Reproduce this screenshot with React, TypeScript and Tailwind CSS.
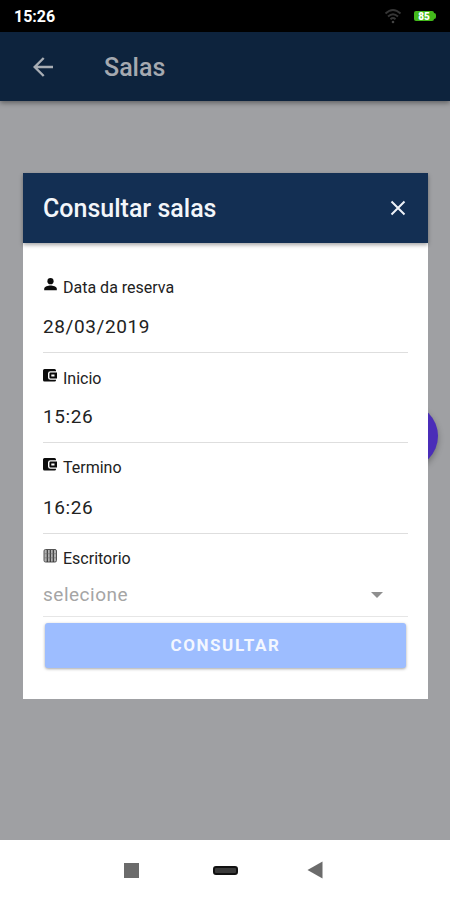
import React, { useState } from 'react';

function WalletIcon() {
  return (
    <svg className="h-[13px] w-[14px]" viewBox="0 0 14 13">
      <path fill="#0c0c0c" d="M1.500 0h10q1.500 0 1.500 1.500v.7H7.500Q5 2.200 5 4.500v4q0 2.300 2.500 2.300H13v.4q0 1.300-1.500 1.300h-10Q0 12.500 0 11V1.500Q0 0 1.500 0z" />
      <path fill="#0c0c0c" fillRule="evenodd" d="M7.500 3.500H14v5.900H7.500q-1.100 0-1.100-1.200V4.700q0-1.200 1.100-1.200zM8.300 5.500v2h3.200v-2z" />
    </svg>
  );
}

function PersonIcon() {
  return (
    <svg className="h-[13px] w-[14px]" viewBox="0 0 14 13">
      <circle cx="7.500" cy="3.200" r="3.100" fill="#0c0c0c" />
      <path fill="#0c0c0c" d="M1.200 12.300v-1.500c0-2.200 4.100-3.200 6.300-3.200s6.300 1 6.300 3.200v1.500z" />
    </svg>
  );
}

function GridIcon() {
  return (
    <svg className="h-[14px] w-[14px]" viewBox="0 0 14 14">
      <rect x="1" y="0.500" width="12.500" height="12.500" rx="1.500" fill="#b0b0b0" stroke="#555" />
      <path d="M4.300 1v12M7.300 1v12M10.300 1v12" stroke="#333" strokeWidth="1.100" />
      <path d="M1.500 4.700h12M1.500 8.800h12" stroke="#666" strokeWidth="0.500" />
    </svg>
  );
}

interface FieldProps {
  icon: React.ReactNode;
  label: string;
  value: string;
  className: string;
}

function Field({ icon, label, value, className }: FieldProps) {
  return (
    <div className={`flex flex-col border-b border-[#dedede] ${className}`}>
      <div className="flex h-5 items-center gap-[6px] text-[16px] text-[#222]">
        <span className="-mt-[7px]">{icon}</span>
        <span>{label}</span>
      </div>
      <div className="mt-auto mb-[13px] h-6 text-[19px] leading-6 tracking-[0.6px] text-[#222]">{value}</div>
    </div>
  );
}

export default function App() {
  const [open, setOpen] = useState(true);

  return (
    <div className="flex h-[900px] w-[450px] flex-col overflow-hidden bg-white font-['Roboto',sans-serif]">
      <div className="flex h-8 shrink-0 items-center bg-black pr-[14px] pl-[14px] text-white">
        <span className="mt-[2px] text-[16px] font-bold">15:26</span>
        <svg className="ml-auto h-4 w-[18px]" viewBox="0 0 18 16" fill="none" stroke="#363636" strokeWidth="1.900">
          <path d="M1.500 5.500q7.500-7 15 0M4 8.500q5-4.500 10 0M6.500 11.200q2.500-2.200 5 0" />
          <circle cx="9" cy="14" r="1.300" fill="#444" stroke="none" />
        </svg>
        <div className="ml-3 flex items-center">
          <span className="h-[10px] w-[20px] rounded-[2px] bg-[#43b91b] text-center text-[10px] leading-[11px] font-black">85</span>
          <span className="h-[6px] w-[2px] rounded-r bg-[#43b91b]" />
        </div>
      </div>

      <header className="z-10 flex h-[69px] shrink-0 items-center bg-[#0d233d] pl-[33px] shadow-[0_2px_5px_rgba(0,0,0,0.4)]">
        <svg className="mt-px h-5 w-5" viewBox="0 0 20 20" fill="none" stroke="#a8adb4" strokeWidth="2.400">
          <path d="M20 10H2M10.700 1L1.700 10l9 9" />
        </svg>
        <h1 className="mt-[2px] ml-[51px] text-[25px] font-medium text-[#a5a9b0]">Salas</h1>
      </header>

      <main className="relative h-[739px] shrink-0 bg-[#9fa0a3] px-[23px] pt-[72px]">
        <div className="absolute top-[303px] left-[374px] h-16 w-16 rounded-full bg-[#4a2db8] shadow-[0_3px_6px_rgba(0,0,0,0.3)]" />
        {open && (
          <div className="relative h-[526px] w-[405px] bg-white">
            <div className="flex h-[70px] items-center justify-between bg-[#132f53] pr-[22px] pl-5 shadow-[0_2px_4px_rgba(0,0,0,0.35)]">
              <h2 className="mt-[2px] text-[25px] font-medium text-[#f3f6fa]">Consultar salas</h2>
              <button onClick={() => setOpen(false)}>
                <svg className="h-4 w-4" viewBox="0 0 16 16" stroke="#eef2f7" strokeWidth="2">
                  <path d="M1.500 1.500l13 13M14.500 1.500l-13 13" />
                </svg>
              </button>
            </div>

            <div className="px-5">
              <Field className="h-[110px] pt-[35px]" icon={<PersonIcon />} label="Data da reserva" value="28/03/2019" />
              <Field className="h-[90px] pt-4" icon={<WalletIcon />} label="Inicio" value="15:26" />
              <Field className="h-[91px] pt-[15px]" icon={<WalletIcon />} label="Termino" value="16:26" />

              <div className="h-[83px] border-b border-[#e6e6e6] pt-[15px]">
                <div className="flex h-5 items-center gap-[6px] text-[16px] text-[#222]">
                  <span className="-mt-[6px]"><GridIcon /></span>
                  <span>Escritorio</span>
                </div>
                <div className="mt-[14px] flex h-6 items-center justify-between pr-[25px] text-[19px] tracking-[0.5px] text-[#a5a5a5]">
                  <span>selecione</span>
                  <svg className="h-[6px] w-3" viewBox="0 0 12 6">
                    <path d="M0 0h12L6 6z" fill="#8f8f8f" />
                  </svg>
                </div>
              </div>

              <button className="mx-[2px] mt-[6px] h-[45px] w-[361px] rounded-[3px] bg-[#9dbdff] text-[17px] font-bold tracking-[1.600px] text-[#f3f7ff] shadow-[0_1px_3px_rgba(0,0,0,0.35)]">
                CONSULTAR
              </button>
            </div>
          </div>
        )}
      </main>

      <nav className="flex h-[60px] items-center bg-white pl-[124px]">
        <span className="h-[15px] w-[15px] bg-[#6b6b6b]" />
        <span className="ml-[74px] h-[9px] w-[25px] rounded-[3px] border-2 border-[#111] bg-[#3a3a3a]" />
        <svg className="ml-[69px] h-[18px] w-[16px]" viewBox="0 0 16 18">
          <path d="M15.500.5v17L.5 9z" fill="#6b6b6b" />
        </svg>
      </nav>
    </div>
  );
}
